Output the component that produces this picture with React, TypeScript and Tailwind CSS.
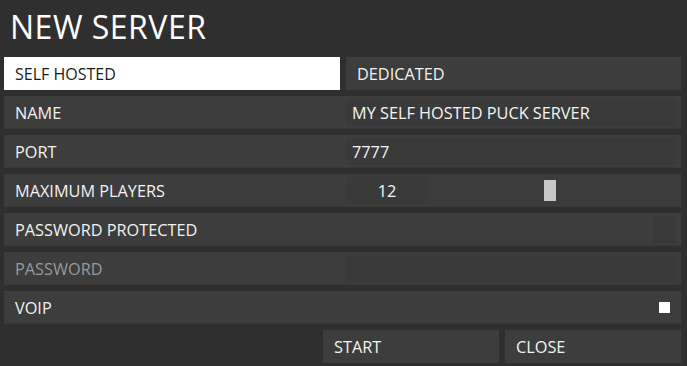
import React from "react";

const font = { fontFamily: '"Open Sans", "Liberation Sans", sans-serif' };

function Row({ label, dim, children }: { label: string; dim?: boolean; children?: React.ReactNode }) {
  return (
    <div className="flex h-[33px] bg-[#3d3d3d] shadow-[inset_0_-1px_0_#383838]">
      <div className={`w-[342px] pl-[11px] pt-[1px] flex items-center text-[16.3px] ${dim ? "text-[#9a9a9a]" : "text-[#f2f2f2]"}`}>
        {label}
      </div>
      <div className="flex-1 flex items-stretch py-[3px] pr-[5px]">{children}</div>
    </div>
  );
}

export default function App() {
  return (
    <div className="w-[687px] h-[366px] bg-[#2f2f2f] overflow-hidden" style={font}>
      <div className="h-[57px] pl-[10px] flex items-center text-[32px] leading-none text-white tracking-[0.5px] pb-[3px]">
        NEW SERVER
      </div>
      <div className="flex flex-col gap-[6px] pl-[4px] pr-[6px]">
        <div className="flex gap-[6px] h-[33px]">
          <div className="w-[336px] bg-white text-[#1a1a1a] flex items-center pl-[11px] pt-[1px] text-[16px]">SELF HOSTED</div>
          <div className="flex-1 bg-[#3d3d3d] text-[#f2f2f2] flex items-center pl-[11px] pt-[1px] text-[16.3px]">DEDICATED</div>
        </div>
        <Row label="NAME">
          <div className="flex-1 bg-[#3a3a3a] flex items-center pl-[6px] pt-[1px] text-[16.3px] text-[#f5f5f5]">
            MY SELF HOSTED PUCK SERVER
          </div>
        </Row>
        <Row label="PORT">
          <div className="flex-1 bg-[#3a3a3a] flex items-center pl-[6px] pt-[1px] text-[16.3px] text-[#f5f5f5]">7777</div>
        </Row>
        <Row label="MAXIMUM PLAYERS">
          <div className="w-[82px] bg-[#3a3a3a] flex items-center justify-center pt-[1px] text-[16.3px] text-[#f5f5f5]">12</div>
          <div className="flex-1 bg-[#3c3c3c] flex items-center pl-[116px]">
            <div className="w-[12px] h-[21px] bg-[#c8c8c8]" />
          </div>
        </Row>
        <Row label="PASSWORD PROTECTED">
          <div className="flex-1" />
          <div className="w-[23px] bg-[#393939]" />
        </Row>
        <Row label="PASSWORD" dim>
          <div className="flex-1 bg-[#3a3a3a]" />
        </Row>
        <Row label="VOIP">
          <div className="flex-1" />
          <div className="w-[23px] flex items-center justify-center">
            <div className="w-[11px] h-[11px] bg-white" />
          </div>
        </Row>
        <div className="flex justify-end gap-[6px] h-[33px]">
          <div className="w-[176px] bg-[#3d3d3d] text-[#f2f2f2] flex items-center pl-[11px] pt-[1px] text-[16.3px]">START</div>
          <div className="w-[176px] bg-[#3d3d3d] text-[#f2f2f2] flex items-center pl-[11px] pt-[1px] text-[16.3px]">CLOSE</div>
        </div>
      </div>
    </div>
  );
}
